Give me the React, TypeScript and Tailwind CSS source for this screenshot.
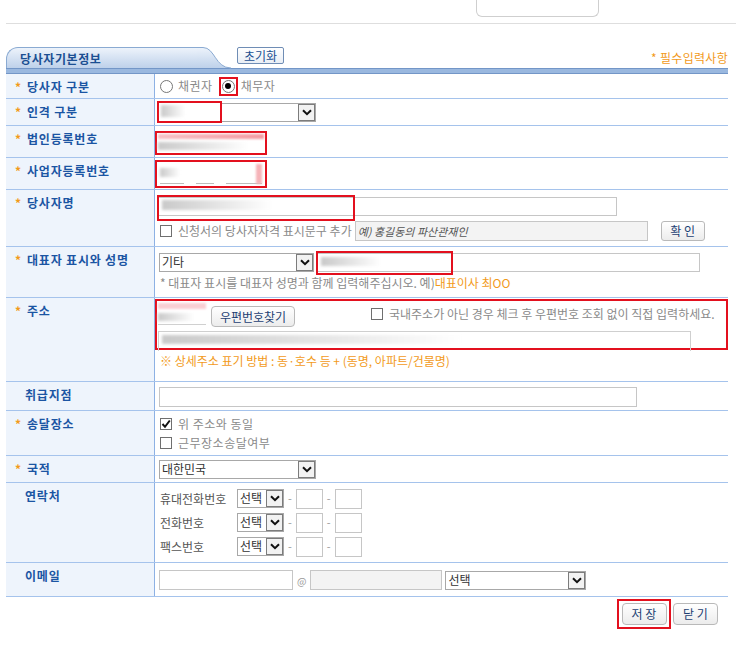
import type { ReactNode } from 'react'

const FONT = { fontFamily: '"Noto Sans CJK KR", "Noto Sans", sans-serif' }

function Chevron() {
  return (
    <svg width="10" height="7" viewBox="0 0 10 7">
      <path d="M1 1.2 L5 5.2 L9 1.2" fill="none" stroke="#111" strokeWidth="2" />
    </svg>
  )
}

function Select({ text, className }: { text?: string; className: string }) {
  return (
    <div className={`flex h-[19px] items-stretch border border-[#a8a8a8] bg-white ${className}`}>
      <span className="flex-1 pl-[2px] text-[12px] leading-[16px] text-[#333]">{text}</span>
      <span className="flex w-[17px] items-center justify-center border border-[#7c7c7c] bg-[#f2f2f2]">
        <Chevron />
      </span>
    </div>
  )
}

function Blur({ className }: { className: string }) {
  return <div className={`bg-gradient-to-r from-[#c9c9c9] via-[#e4e4e4] to-white blur-[1.5px] ${className}`} />
}

function Check({ on }: { on?: boolean }) {
  return (
    <span className="flex h-[12px] w-[12px] shrink-0 items-center justify-center border border-[#6f6f6f] bg-white">
      {on && (
        <svg width="10" height="10" viewBox="0 0 10 10">
          <path d="M1.5 5 L4 7.8 L8.8 1.5" fill="none" stroke="#111" strokeWidth="2" />
        </svg>
      )}
    </span>
  )
}

function Radio({ on }: { on?: boolean }) {
  return (
    <span className="flex h-[13px] w-[13px] shrink-0 items-center justify-center rounded-full border border-[#777] bg-white">
      {on && <span className="h-[6px] w-[6px] rounded-full bg-black" />}
    </span>
  )
}

function Btn({ children, className }: { children: ReactNode; className: string }) {
  return (
    <button
      type="button"
      className={`flex h-[20px] items-center justify-center rounded-[3px] border border-[#b9b9b9] bg-gradient-to-b from-white to-[#ececec] text-[12px] leading-none text-[#1d3f73] ${className}`}
    >
      {children}
    </button>
  )
}

function Row({
  label,
  star,
  h,
  children,
}: {
  label: string
  star?: boolean
  h: string
  children: ReactNode
}) {
  return (
    <div className={`flex border-b border-[#a5c3ec] ${h}`}>
      <div
        className={`flex w-[149px] shrink-0 items-start border-r border-[#8db1e4] bg-[#eef4fc] pt-[5px] text-[12px] font-bold leading-[16px] tracking-[0.8px] text-[#1b55a3] ${
          star ? 'pl-[9px]' : 'pl-[19px]'
        }`}
      >
        {star && <span className="w-[12px] text-[12px] font-bold text-[#f29a1a]">*</span>}
        <span className="whitespace-pre">{label}</span>
      </div>
      <div className="relative min-w-0 flex-1">{children}</div>
    </div>
  )
}

const gray = 'text-[12px] leading-[16px] text-[#8a8a8a]'

export default function App() {
  return (
    <div className="h-[649px] w-[736px] overflow-hidden bg-white" style={FONT}>
      {/* top strip */}
      <div className="ml-[6px] h-[24px] border-b border-[#dedede]">
        <div className="ml-[470px] h-[17px] w-[123px] rounded-b-[6px] border border-t-0 border-[#cfcfcf]" />
      </div>

      <div className="mx-[6px] mt-[23px] w-[722px]">
        {/* tab header */}
        <div className="flex h-[21px] items-end">
          <div className="flex h-[21px] w-[231px] shrink-0">
            <div className="flex h-[21px] w-[205px] items-center rounded-tl-[12px] border-l border-t border-[#8aaad2] bg-gradient-to-b from-[#edf3fb] to-[#bed1ea] pl-[13px] pt-[2px] text-[12px] font-bold tracking-[0.6px] text-[#1b4f92]">
              당사자기본정보
            </div>
            <svg width="40" height="21" viewBox="0 0 40 21" className="shrink-0 overflow-visible">
              <defs>
                <linearGradient id="tabg" x1="0" y1="0" x2="0" y2="1">
                  <stop offset="0" stopColor="#edf3fb" />
                  <stop offset="1" stopColor="#bed1ea" />
                </linearGradient>
              </defs>
              <path d="M0 0.5 L6 0.5 C18 0.5 18 21 34 21 L0 21 Z" fill="url(#tabg)" />
              <path d="M0 0.5 L6 0.5 C18 0.5 18 21 34 21" fill="none" stroke="#8aaad2" strokeWidth="1" />
            </svg>
          </div>
          <button
            type="button"
            className="mb-[4px] flex h-[17px] w-[47px] items-center justify-center rounded-[2px] border border-[#6f8db5] bg-gradient-to-b from-white to-[#e9eef5] text-[12px] leading-none text-[#1b4f92]"
          >
            초기화
          </button>
          <span className="mb-[3px] ml-auto text-[12px] leading-[15px] tracking-[0.3px] text-[#f29a1a]">* 필수입력사항</span>
        </div>
        <div className="h-[6px] border-y border-[#7396c7] bg-[#9ab8df]" />

        {/* 당사자 구분 */}
        <Row label="당사자 구분" star h="h-[25px]">
          <div className="flex h-full items-center pl-[5px]">
            <Radio />
            <span className={`${gray} ml-[5px] tracking-[0.5px]`}>채권자</span>
            <span className="ml-[6px] flex h-[19px] w-[19px] items-center justify-center border-2 border-[#e3101e]">
              <Radio on />
            </span>
            <span className={`${gray} ml-[3px] tracking-[0.5px]`}>채무자</span>
          </div>
        </Row>

        {/* 인격 구분 */}
        <Row label="인격 구분" star h="h-[27px]">
          <div className="relative ml-[2px] mt-[4px] w-[159px]">
            <Select className="w-[159px]" />
            <div className="absolute -top-[2px] left-0 h-[22px] w-[65px] border-2 border-[#e3101e] bg-white p-[2px]">
              <Blur className="h-[12px] w-[24px]" />
            </div>
          </div>
        </Row>

        {/* 법인등록번호 */}
        <Row label="법인등록번호" star h="h-[32px]">
          <div className="mt-[5px] flex h-[24px] w-[112px] flex-col gap-[3px] border-2 border-[#e3101e] p-[1px]">
            <div className="h-[5px] w-full bg-gradient-to-r from-[#f6c2c6] to-[#f39aa2] blur-[1px]" />
            <Blur className="h-[8px] w-[90px]" />
          </div>
        </Row>

        {/* 사업자등록번호 */}
        <Row label="사업자등록번호" star h="h-[32px]">
          <div className="mt-[2px] flex h-[28px] w-[112px] items-end gap-[12px] border-2 border-[#e3101e] px-[3px] pb-[2px]">
            <div className="h-[20px] w-[24px] border-b border-[#bdbdbd]">
              <Blur className="mt-[4px] h-[9px] w-[20px]" />
            </div>
            <div className="h-[20px] w-[18px] border-b border-[#bdbdbd]" />
            <div className="h-[20px] w-[36px] border-b border-[#bdbdbd]">
              <div className="ml-auto h-[20px] w-[6px] bg-[#f6b3b8] blur-[1px]" />
            </div>
          </div>
        </Row>

        {/* 당사자명 */}
        <Row label="당사자명" star h="h-[57px]">
          <div className="relative ml-[2px] mt-[7px] h-[19px] w-[460px] border border-[#c6c6c6]">
            <div className="absolute -left-[1px] -top-[3px] h-[26px] w-[198px] border-2 border-[#e3101e] px-[3px] pt-[3px]">
              <Blur className="h-[10px] w-[110px]" />
            </div>
          </div>
          <div className="mt-[5px] flex items-center pl-[5px]">
            <Check />
            <span className={`${gray} ml-[6px] whitespace-nowrap`}>신청서의 당사자자격 표시문구 추가</span>
            <div className="ml-[3px] flex h-[20px] w-[293px] items-center border border-[#c6c6c6] bg-[#f3f3f3] pl-[2px] text-[11px] italic text-[#555]">
              예) 홍길동의 파산관재인
            </div>
            <Btn className="ml-[13px] w-[44px]">확 인</Btn>
          </div>
        </Row>

        {/* 대표자 표시와 성명 */}
        <Row label="대표자 표시와 성명" star h="h-[51px]">
          <div className="ml-[4px] mt-[6px] flex">
            <Select text="기타" className="w-[155px]" />
            <div className="relative ml-[2px] h-[19px] w-[384px] border border-[#c6c6c6]">
              <div className="absolute -left-[1px] -top-[3px] h-[24px] w-[137px] border-2 border-[#e3101e] px-[3px] pt-[4px]">
                <Blur className="h-[9px] w-[60px]" />
              </div>
            </div>
          </div>
          <div className="mt-[3px] pl-[5px] text-[12px] leading-[16px] whitespace-nowrap text-[#8a8a8a]">
            * 대표자 표시를 대표자 성명과 함께 입력해주십시오. 예)<span className="text-[#f29a1a]">대표이사 최OO</span>
          </div>
        </Row>

        {/* 주소 */}
        <Row label="주소" star h="h-[84px]">
          <div className="mt-[1px] h-[51px] w-full border-2 border-[#e3101e] pl-[1px] pt-[1px]">
            <div className="flex items-start">
              <div className="mt-[1px] h-[22px] w-[48px] border-b border-[#d0d0d0]">
                <div className="h-[6px] w-[48px] bg-[#f9cfd3] blur-[1px]" />
                <Blur className="mt-[4px] h-[8px] w-[36px]" />
              </div>
              <Btn className="ml-[5px] mt-[4px] h-[21px] w-[84px] rounded-[4px]">우편번호찾기</Btn>
              <span className="ml-[76px] mt-[6px]">
                <Check />
              </span>
              <span className="ml-[6px] mt-[4px] whitespace-nowrap text-[12px] leading-[16px] text-[#8a8a8a]">
                국내주소가 아닌 경우 체크 후 우편번호 조회 없이 직접 입력하세요.
              </span>
            </div>
            <div className="mt-[4px] h-[20px] w-[533px] border-x border-t border-[#cfcfcf] pl-[3px] pt-[3px]">
              <Blur className="h-[9px] w-[300px]" />
            </div>
          </div>
          <div className="mt-[3px] pl-[5px] text-[12px] leading-[16px] whitespace-nowrap text-[#f29a1a]">
            ※ 상세주소 표기 방법 : 동·호수 등 + (동명, 아파트/건물명)
          </div>
        </Row>

        {/* 취급지점 */}
        <Row label="취급지점" h="h-[29px]">
          <div className="ml-[4px] mt-[5px] h-[20px] w-[478px] border border-[#c6c6c6]" />
        </Row>

        {/* 송달장소 */}
        <Row label="송달장소" star h="h-[45px]">
          <div className="flex flex-col gap-[3px] pl-[5px] pt-[5px]">
            <div className="flex items-center">
              <Check on />
              <span className={`${gray} ml-[6px] tracking-[0.5px]`}>위 주소와 동일</span>
            </div>
            <div className="flex items-center">
              <Check />
              <span className={`${gray} ml-[6px] tracking-[0.5px]`}>근무장소송달여부</span>
            </div>
          </div>
        </Row>

        {/* 국적 */}
        <Row label="국적" star h="h-[27px]">
          <Select text="대한민국" className="ml-[4px] mt-[4px] w-[157px]" />
        </Row>

        {/* 연락처 */}
        <Row label="연락처" h="h-[80px]">
          <div className="flex flex-col gap-[5px] pl-[5px] pt-[6px]">
            {['휴대전화번호', '전화번호', '팩스번호'].map((t) => (
              <div key={t} className="flex h-[19px] items-center">
                <span className="w-[77px] text-[12px] text-[#555]">{t}</span>
                <Select text="선택" className="w-[47px]" />
                <span className="mx-[4px] text-[11px] text-[#999]">-</span>
                <div className="h-[20px] w-[27px] border border-[#c6c6c6]" />
                <span className="mx-[4px] text-[11px] text-[#999]">-</span>
                <div className="h-[20px] w-[27px] border border-[#c6c6c6]" />
              </div>
            ))}
          </div>
        </Row>

        {/* 이메일 */}
        <Row label="이메일" h="h-[34px]">
          <div className="ml-[4px] mt-[7px] flex items-center">
            <div className="h-[20px] w-[134px] border border-[#c6c6c6]" />
            <span className="mx-[4px] text-[10px] text-[#999]">@</span>
            <div className="h-[20px] w-[132px] border border-[#c6c6c6] bg-[#f3f3f3]" />
            <Select text="선택" className="ml-[3px] w-[141px]" />
          </div>
        </Row>

        {/* buttons */}
        <div className="mt-[2px] flex justify-end pr-[10px]">
          <div className="flex h-[30px] w-[54px] items-center justify-center border-2 border-[#e3101e]">
            <Btn className="h-[22px] w-[45px] rounded-[4px]">저 장</Btn>
          </div>
          <Btn className="ml-[2px] mt-[4px] h-[22px] w-[45px] rounded-[4px]">닫 기</Btn>
        </div>
      </div>
    </div>
  )
}
